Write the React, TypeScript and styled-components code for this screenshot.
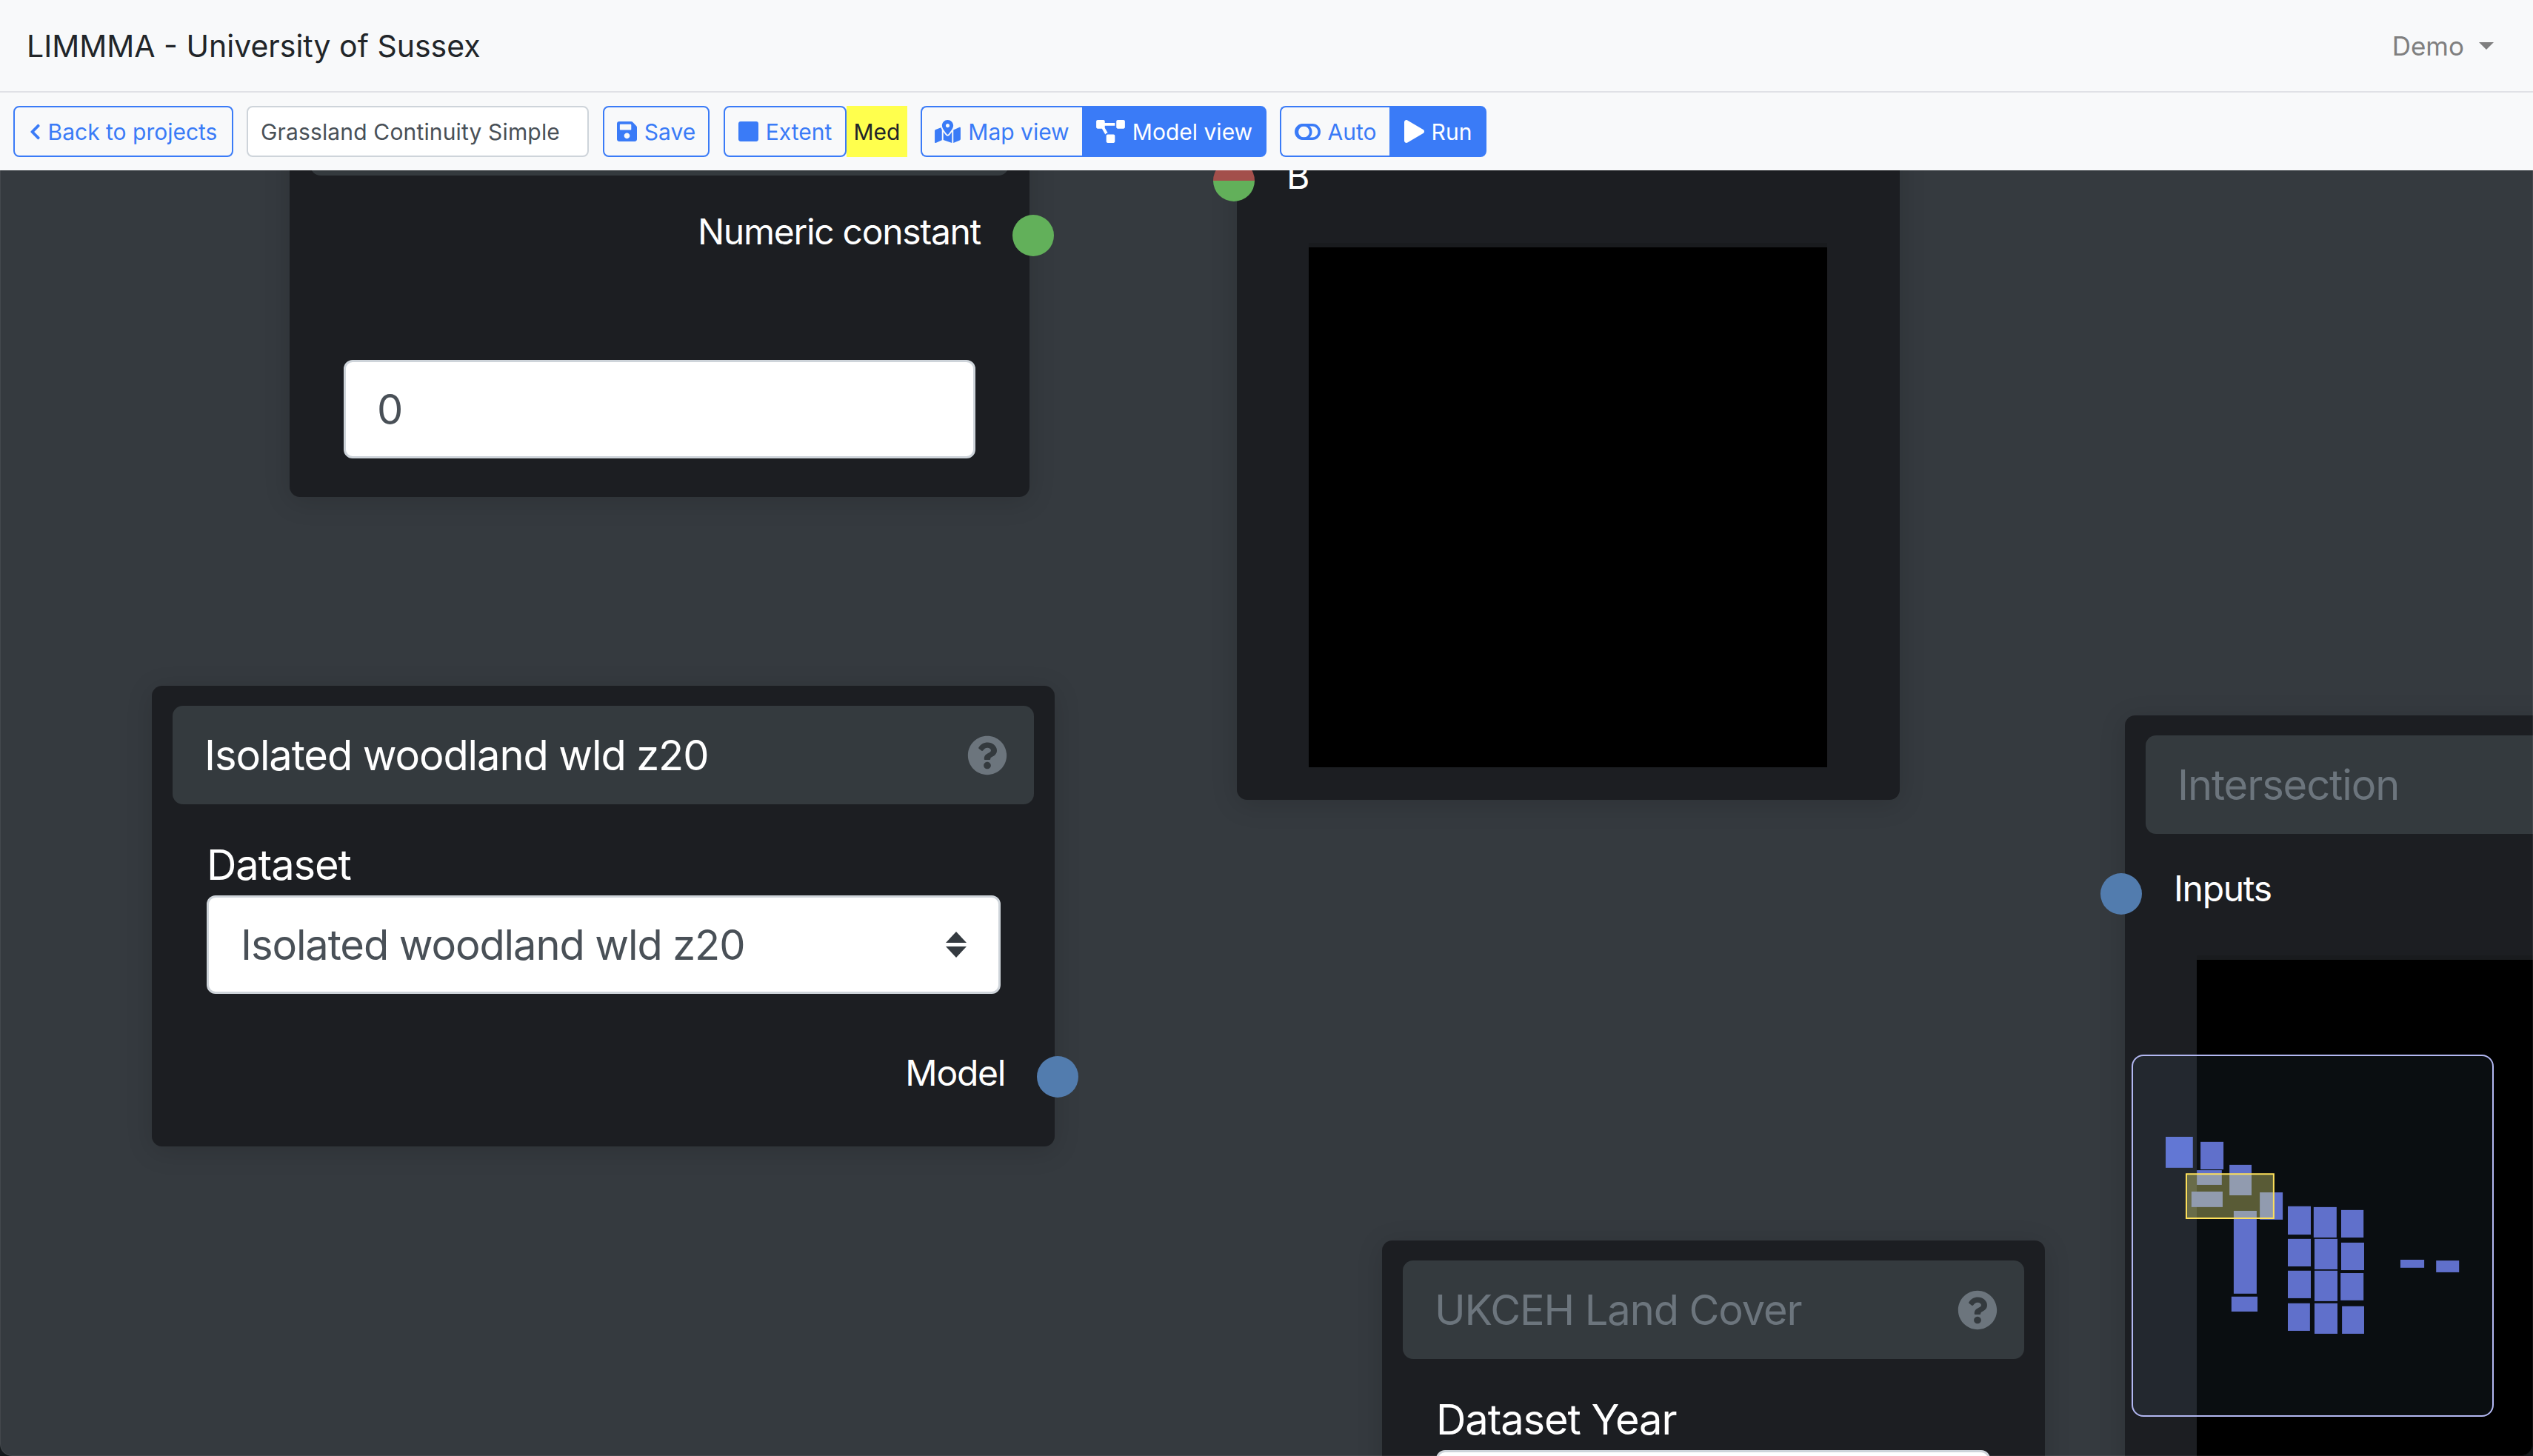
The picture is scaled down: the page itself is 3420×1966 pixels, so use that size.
import React from "react";
import styled, { createGlobalStyle } from "styled-components";
import {
  FaChevronLeft,
  FaSave,
  FaSquare,
  FaMapMarkedAlt,
  FaProjectDiagram,
  FaPlay,
  FaQuestionCircle,
} from "react-icons/fa";

const Global = createGlobalStyle`
  html, body { margin: 0; padding: 0; background: #14191c; }
  * { box-sizing: border-box; }
  body { font-family: Inter, "Liberation Sans", sans-serif; }
`;

const Page = styled.div`
  width: 3420px;
  height: 1966px;
  display: flex;
  flex-direction: column;
  overflow: hidden;
`;

const Navbar = styled.header`
  height: 125px;
  flex: none;
  background: #f8f9fa;
  border-bottom: 2px solid #e0e1e6;
  padding: 0 53px 0 36px;
  display: flex;
  align-items: center;
  justify-content: space-between;
`;

const Brand = styled.div`
  font-size: 41px;
  color: #212529;
`;

const UserMenu = styled.div`
  display: flex;
  align-items: center;
  gap: 20px;
  font-size: 35px;
  color: #7f7f7f;
`;

const Caret = styled.span`
  width: 0;
  height: 0;
  border-left: 10px solid transparent;
  border-right: 10px solid transparent;
  border-top: 10px solid #7f7f7f;
`;

const Toolbar = styled.nav`
  height: 105px;
  flex: none;
  background: #f8f9fa;
  padding-left: 18px;
  display: flex;
  align-items: center;
  position: relative;
  z-index: 2;
`;

const OutlineButton = styled.button<{ $w: number; $ml?: number }>`
  width: ${(p) => p.$w}px;
  height: 69px;
  margin-left: ${(p) => p.$ml ?? 0}px;
  padding: 0;
  display: inline-flex;
  align-items: center;
  justify-content: center;
  gap: 10px;
  font: 400 30px Inter, sans-serif;
  color: #3a7bf7;
  background: transparent;
  border: 2px solid #3a7bf7;
  border-radius: 8px;
  white-space: nowrap;
`;

const BackIcon = styled(FaChevronLeft)`
  width: 15px;
  height: 24px;
`;

const SaveIcon = styled(FaSave)`
  width: 27px;
  height: 31px;
`;

const ExtentIcon = styled(FaSquare)`
  width: 27px;
  height: 31px;
`;

const MapIcon = styled(FaMapMarkedAlt)`
  width: 35px;
  height: 31px;
`;

const DiagramIcon = styled(FaProjectDiagram)`
  width: 39px;
  height: 31px;
`;

const RunIcon = styled(FaPlay)`
  width: 27px;
  height: 31px;
`;

const NameInput = styled.input`
  width: 462px;
  height: 69px;
  margin-left: 18px;
  padding: 0 17px;
  font: 400 30px Inter, sans-serif;
  letter-spacing: 0.15px;
  color: #495057;
  background: #fff;
  border: 2px solid #ced4da;
  border-radius: 8px;
`;

const Level = styled.span`
  width: 82px;
  height: 69px;
  display: inline-flex;
  align-items: center;
  justify-content: center;
  font-size: 30px;
  color: #212529;
  background: #ffff4d;
`;

const Group = styled.div`
  display: inline-flex;
  height: 69px;
  margin-left: 18px;
`;

const GroupButton = styled.button<{ $w: number; $active?: boolean; $first?: boolean }>`
  width: ${(p) => p.$w}px;
  height: 69px;
  padding: 0;
  display: inline-flex;
  align-items: center;
  justify-content: center;
  gap: 10px;
  font: 400 30px Inter, sans-serif;
  white-space: nowrap;
  color: ${(p) => (p.$active ? "#fff" : "#3a7bf7")};
  background: ${(p) => (p.$active ? "#3a7bf7" : "transparent")};
  border: 2px solid #3a7bf7;
  border-right-width: ${(p) => (p.$first ? 0 : 2)}px;
  border-radius: ${(p) => (p.$first ? "8px 0 0 8px" : "0 8px 8px 0")};
`;

const Canvas = styled.main`
  flex: 1;
  position: relative;
  overflow: hidden;
  background: #353a3f;
  border-radius: 0 0 16px 16px;

  &::after {
    content: "";
    position: absolute;
    inset: 0;
    z-index: 5;
    pointer-events: none;
    border: 1px solid rgba(255, 255, 255, 0.07);
    border-top: none;
    border-radius: 0 0 16px 16px;
  }
`;

const Node = styled.section<{ $x: number; $y: number; $w: number; $h: number }>`
  position: absolute;
  left: ${(p) => p.$x}px;
  top: ${(p) => p.$y}px;
  width: ${(p) => p.$w}px;
  height: ${(p) => p.$h}px;
  padding: 27px 28px 0;
  background: #1c1e22;
  border-radius: 14px;
  box-shadow: 0 6px 36px rgba(0, 0, 0, 0.14);
  display: flex;
  flex-direction: column;
`;

const NodeHeader = styled.div<{ $dim?: boolean }>`
  height: 133px;
  flex: none;
  padding: 0 36px 0 43px;
  display: flex;
  align-items: center;
  justify-content: space-between;
  background: #343a3e;
  border-radius: 14px;
  font-size: 56px;
  letter-spacing: -1.1px;
  color: ${(p) => (p.$dim ? "#6c757d" : "#fff")};
  white-space: nowrap;
`;

const HelpIcon = styled(FaQuestionCircle)`
  width: 54px;
  height: 54px;
  color: #6c757d;
  flex: none;
`;

const PortRow = styled.div<{ $mt: number; $pl?: number; $pr?: number; $end?: boolean }>`
  margin-top: ${(p) => p.$mt}px;
  padding-left: ${(p) => p.$pl ?? 0}px;
  padding-right: ${(p) => p.$pr ?? 0}px;
  display: flex;
  justify-content: ${(p) => (p.$end ? "flex-end" : "flex-start")};
  font-size: 48px;
  letter-spacing: -1.3px;
  line-height: 72px;
  color: #fff;
`;

const Handle = styled.span<{ $x: number; $y: number; $color: string; $split?: boolean }>`
  position: absolute;
  left: ${(p) => p.$x}px;
  top: ${(p) => p.$y}px;
  width: 56px;
  height: 56px;
  border-radius: 50%;
  background: ${(p) =>
    p.$split ? `linear-gradient(#a34f4b 50%, ${p.$color} 50%)` : p.$color};
  z-index: 1;
`;

const FieldLabel = styled.label<{ $mt: number; $ml: number }>`
  display: block;
  margin: ${(p) => p.$mt}px 0 2px ${(p) => p.$ml}px;
  font-size: 56px;
  letter-spacing: -1.1px;
  line-height: 78px;
  color: #fff;
`;

const ValueInput = styled.input`
  display: block;
  width: 853px;
  height: 133px;
  margin: 137px 0 0 45px;
  padding: 0 42px;
  font: 400 56px Inter, sans-serif;
  color: #495057;
  background: #fff;
  border: 3px solid #ced4da;
  border-radius: 12px;
  outline: none;
`;

const SelectBox = styled.div<{ $w: number; $ml: number }>`
  width: ${(p) => p.$w}px;
  height: 133px;
  flex: none;
  margin-left: ${(p) => p.$ml}px;
  padding: 0 42px 0 43px;
  display: flex;
  align-items: center;
  justify-content: space-between;
  font-size: 56px;
  letter-spacing: -1.1px;
  color: #495057;
  background: #fff;
  border: 3px solid #ced4da;
  border-radius: 12px;
  white-space: nowrap;
`;

const ImageWell = styled.div<{ $ml: number; $mt: number; $w: number; $h: number }>`
  flex: none;
  margin: ${(p) => p.$mt}px 0 0 ${(p) => p.$ml}px;
  width: ${(p) => p.$w}px;
  height: ${(p) => p.$h}px;
  background: #000;
  border-top: 6px solid #191b1e;
`;

const MiniMap = styled.aside`
  position: absolute;
  left: 2878px;
  top: 1194px;
  width: 489px;
  height: 489px;
  z-index: 3;
  border: 2px solid #b3b8f2;
  border-radius: 16px;
  background: rgba(93, 131, 159, 0.107);
  overflow: hidden;
`;

const MiniSvg = styled.svg`
  display: block;
  width: 100%;
  height: 100%;
`;

const AutoIcon = () => (
  <svg width="35" height="22" viewBox="0 0 35 22" fill="none" stroke="currentColor" strokeWidth="3.6">
    <rect x="1.8" y="1.8" width="31.4" height="18.4" rx="9.2" />
    <circle cx="12.5" cy="11" r="9.2" />
  </svg>
);

const SortArrows = () => (
  <svg width="30" height="35" viewBox="0 0 30 35" fill="#343a40">
    <path d="M15 0 L29 15 H1 Z" />
    <path d="M15 35 L1 20 H29 Z" />
  </svg>
);

const miniRects: number[][] = [
  [395, 393, 81, 103], [382, 499, 88, 55], [497, 479, 78, 114], [363, 579, 110, 58],
  [604, 582, 81, 102], [512, 651, 81, 310], [504, 972, 92, 56], [703, 634, 81, 106],
  [794, 637, 81, 114], [891, 648, 79, 103], [703, 756, 81, 103], [797, 756, 81, 114],
  [891, 770, 81, 103], [703, 875, 81, 103], [797, 875, 81, 114], [889, 884, 81, 102],
  [703, 997, 78, 103], [797, 997, 81, 114], [894, 1008, 78, 103], [1100, 834, 84, 30],
  [1226, 837, 81, 44],
];

export default function App() {
  return (
    <Page>
      <Global />
      <Navbar>
        <Brand>LIMMMA - University of Sussex</Brand>
        <UserMenu>
          Demo
          <Caret />
        </UserMenu>
      </Navbar>
      <Toolbar>
        <OutlineButton $w={297}>
          <BackIcon />
          Back to projects
        </OutlineButton>
        <NameInput readOnly value="Grassland Continuity Simple" />
        <OutlineButton $w={144} $ml={19}>
          <SaveIcon />
          Save
        </OutlineButton>
        <OutlineButton $w={166} $ml={19}>
          <ExtentIcon />
          Extent
        </OutlineButton>
        <Level>Med</Level>
        <Group>
          <GroupButton $w={218} $first>
            <MapIcon />
            Map view
          </GroupButton>
          <GroupButton $w={249} $active>
            <DiagramIcon />
            Model view
          </GroupButton>
        </Group>
        <Group>
          <GroupButton $w={148} $first>
            <AutoIcon />
            Auto
          </GroupButton>
          <GroupButton $w={131} $active>
            <RunIcon />
            Run
          </GroupButton>
        </Group>
      </Toolbar>
      <Canvas>
        <Node $x={391} $y={-153} $w={999} $h={594}>
          <NodeHeader />
          <PortRow $mt={40} $pr={38} $end>
            Numeric constant
          </PortRow>
          <ValueInput readOnly value="0" />
          <Handle $x={976} $y={213} $color="#62b05a" />
        </Node>

        <Node $x={1670} $y={-230} $w={895} $h={1080}>
          <NodeHeader />
          <PortRow $mt={42} $pl={39}>
            B
          </PortRow>
          <ImageWell $ml={69} $mt={54} $w={700} $h={708} />
          <Handle $x={-32} $y={216} $color="#62b05a" $split />
        </Node>

        <Node $x={205} $y={696} $w={1219} $h={622}>
          <NodeHeader>
            Isolated woodland wld z20
            <HelpIcon />
          </NodeHeader>
          <FieldLabel $mt={43} $ml={46}>
            Dataset
          </FieldLabel>
          <SelectBox $w={1072} $ml={46}>
            Isolated woodland wld z20
            <SortArrows />
          </SelectBox>
          <PortRow $mt={71} $pr={39} $end>
            Model
          </PortRow>
          <Handle $x={1195} $y={500} $color="#527cae" />
        </Node>

        <Node $x={1866} $y={1445} $w={895} $h={700}>
          <NodeHeader $dim>
            UKCEH Land Cover
            <HelpIcon />
          </NodeHeader>
          <FieldLabel $mt={43} $ml={45}>
            Dataset Year
          </FieldLabel>
          <SelectBox $w={748} $ml={45} />
        </Node>

        <Node $x={2869} $y={736} $w={900} $h={1400}>
          <NodeHeader $dim>Intersection</NodeHeader>
          <PortRow $mt={38} $pl={38}>
            Inputs
          </PortRow>
          <ImageWell $ml={69} $mt={54} $w={700} $h={800} />
          <Handle $x={-33} $y={213} $color="#527cae" />
        </Node>

        <MiniMap>
          <MiniSvg viewBox="157 72 1267 1344" preserveAspectRatio="none">
            <rect x={272} y={374} width={96} height={116} fill="#6277d4" />
            {miniRects.map(([x, y, w, h]) => (
              <rect key={`${x}-${y}`} x={x} y={y} width={w} height={h} fill="#6070cb" />
            ))}
            <rect
              x={345}
              y={513}
              width={308}
              height={166}
              fill="rgba(238, 234, 123, 0.35)"
              stroke="#ffe15a"
              strokeWidth={2}
              vectorEffect="non-scaling-stroke"
            />
          </MiniSvg>
        </MiniMap>
      </Canvas>
    </Page>
  );
}
